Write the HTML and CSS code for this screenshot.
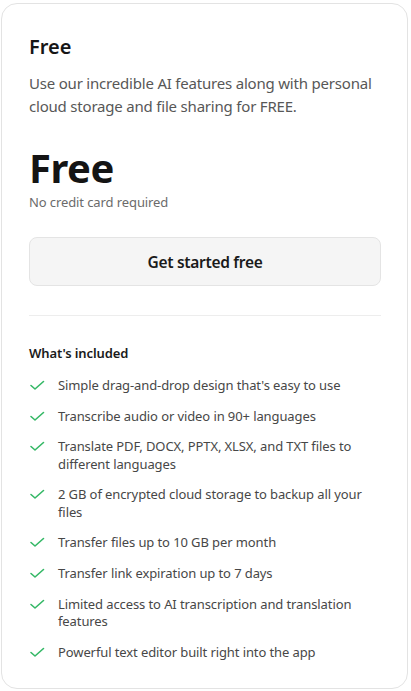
FILE: index.html
```html
<!DOCTYPE html>
<html lang="en">
<head>
<meta charset="utf-8">
<title>Free plan</title>
<link rel="stylesheet" href="styles.css">
</head>
<body>
<div class="card">
  <h2 class="plan-name">Free</h2>
  <p class="plan-desc">Use our incredible AI features along with personal cloud storage and file sharing for FREE.</p>
  <div class="price">Free</div>
  <p class="price-note">No credit card required</p>
  <button class="cta">Get started free</button>
  <hr class="divider">
  <h3 class="included-title">What's included</h3>
  <ul class="features">
    <li><svg class="check" viewBox="0 0 16 16"><path d="M2 8.5 L6 12 L14.5 4.5"/></svg><span>Simple drag-and-drop design that's easy to use</span></li>
    <li><svg class="check" viewBox="0 0 16 16"><path d="M2 8.5 L6 12 L14.5 4.5"/></svg><span>Transcribe audio or video in 90+ languages</span></li>
    <li><svg class="check" viewBox="0 0 16 16"><path d="M2 8.5 L6 12 L14.5 4.5"/></svg><span>Translate PDF, DOCX, PPTX, XLSX, and TXT files to different languages</span></li>
    <li><svg class="check" viewBox="0 0 16 16"><path d="M2 8.5 L6 12 L14.5 4.5"/></svg><span>2 GB of encrypted cloud storage to backup all your files</span></li>
    <li><svg class="check" viewBox="0 0 16 16"><path d="M2 8.5 L6 12 L14.5 4.5"/></svg><span>Transfer files up to 10 GB per month</span></li>
    <li><svg class="check" viewBox="0 0 16 16"><path d="M2 8.5 L6 12 L14.5 4.5"/></svg><span>Transfer link expiration up to 7 days</span></li>
    <li><svg class="check" viewBox="0 0 16 16"><path d="M2 8.5 L6 12 L14.5 4.5"/></svg><span>Limited access to AI transcription and translation features</span></li>
    <li><svg class="check" viewBox="0 0 16 16"><path d="M2 8.5 L6 12 L14.5 4.5"/></svg><span>Powerful text editor built right into the app</span></li>
  </ul>
</div>
</body>
</html>
```
FILE: styles.css
```css
* { box-sizing: border-box; }
html, body { background: #ffffff; }
body {
  margin: 0;
  padding: 3px 3px 3px 1px;
  font-family: "Noto Sans", "Open Sans", sans-serif;
  color: #1a1a1a;
}
.card {
  width: 407px;
  border: 1px solid #e3e3e3;
  border-radius: 16px;
  padding: 29px 26px 27px 27px;
  display: flex;
  flex-direction: column;
}
.plan-name {
  margin: 0;
  font-size: 20px;
  line-height: 28px;
  font-weight: 600;
  color: #161616;
}
.plan-desc {
  margin: 11px 0 0;
  font-size: 15px;
  line-height: 22.5px;
  letter-spacing: -0.2px;
  color: #575757;
}
.price {
  margin-top: 31px;
  font-size: 40px;
  line-height: 40px;
  font-weight: 700;
  letter-spacing: -0.5px;
  color: #141414;
}
.price-note {
  margin: 5px 0 0;
  font-size: 13px;
  line-height: 18px;
  letter-spacing: -0.1px;
  color: #6b6b6b;
}
.cta {
  margin-top: 26px;
  height: 49px;
  width: 100%;
  border: 1px solid #e4e4e4;
  border-radius: 8px;
  background: #f5f5f5;
  font-family: inherit;
  font-size: 15.5px;
  font-weight: 600;
  letter-spacing: -0.3px;
  color: #1a1a1a;
}
.divider {
  margin: 29px 0 0;
  border: 0;
  height: 1px;
  background: #ededed;
}
.included-title {
  margin: 28px 0 0;
  font-size: 13px;
  line-height: 18px;
  font-weight: 600;
  letter-spacing: -0.1px;
  color: #1a1a1a;
}
.features {
  list-style: none;
  margin: 15px 0 0;
  padding: 0;
  display: flex;
  flex-direction: column;
  gap: 13.1px;
}
.features li {
  display: flex;
  align-items: flex-start;
  gap: 13px;
  font-size: 13px;
  line-height: 17.5px;
  letter-spacing: -0.1px;
  color: #474747;
}
.check {
  flex: none;
  width: 16px;
  height: 16px;
  fill: none;
  stroke: #34b866;
  stroke-width: 1.6;
  stroke-linecap: round;
  stroke-linejoin: round;
}
```
